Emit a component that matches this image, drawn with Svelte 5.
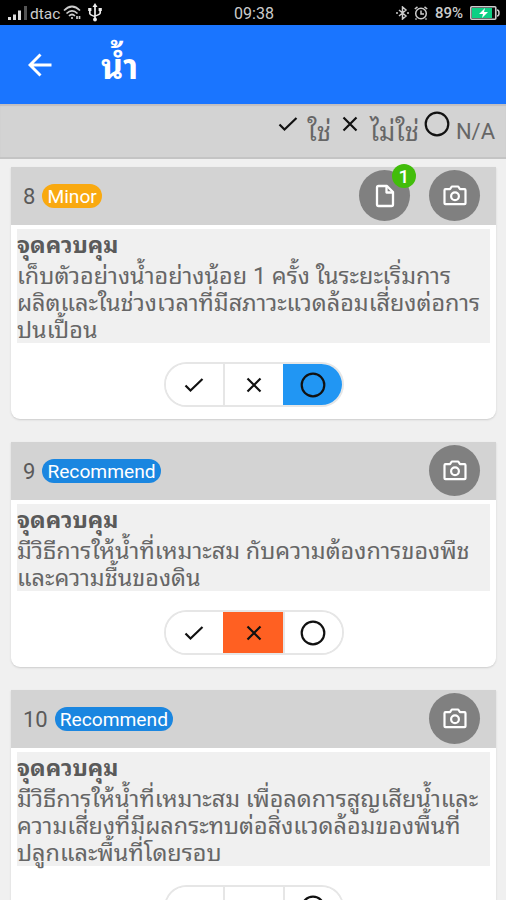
<script>
    let items = $state([
        {
            no: 8,
            level: "Minor",
            notes: 1,
            answer: "na",
            lines: [
                "เก็บตัวอย่างน้ำอย่างน้อย 1 ครั้ง ในระยะเริ่มการ",
                "ผลิตและในช่วงเวลาที่มีสภาวะแวดล้อมเสี่ยงต่อการ",
                "ปนเปื้อน"
            ]
        },
        {
            no: 9,
            level: "Recommend",
            notes: 0,
            answer: "no",
            lines: [
                "มีวิธีการให้น้ำที่เหมาะสม กับความต้องการของพืช",
                "และความชื้นของดิน"
            ]
        },
        {
            no: 10,
            level: "Recommend",
            notes: 0,
            answer: "",
            lines: [
                "มีวิธีการให้น้ำที่เหมาะสม เพื่อลดการสูญเสียน้ำและ",
                "ความเสี่ยงที่มีผลกระทบต่อสิ่งแวดล้อมของพื้นที่",
                "ปลูกและพื้นที่โดยรอบ"
            ]
        }
    ]);

    const choices = ["yes", "no", "na"];
</script>

{#snippet mark(kind)}
    <svg class="mark" width="28" height="28" viewBox="0 0 28 28">
        {#if kind === "yes"}
            <path d="M5.500 14.500l5 5L22.500 8" />
        {:else if kind === "no"}
            <path d="M7.500 7.500l13 13M20.500 7.500l-13 13" />
        {:else}
            <circle cx="14" cy="14" r="11.300" />
        {/if}
    </svg>
{/snippet}

<main>
    <div class="status">
        <div class="side">
            <svg width="20" height="14" viewBox="0 0 20 14">
                <path d="M0 11h3v3H0zM5 8.500h3V14H5zM10 4.500h3V14h-3z" fill="#ddd" />
                <path d="M16 0h3v14h-3z" fill="#555" />
            </svg>
            <span class="carrier">dtac</span>
            <svg width="18" height="15" viewBox="0 0 18 15" fill="none" stroke="#ccc" stroke-width="1.7">
                <path d="M1 5.500Q9-2.500 17 5.500M3.500 8.500Q9 3 14.500 8.500M6 11Q9 8 12 11" />
                <path d="M9 12v2M14 11v3M16.500 11v3" />
            </svg>
            <svg class="usb" width="14" height="19" viewBox="0 0 14 19" fill="none" stroke="#eee" stroke-width="1.700">
                <path d="M7 3v13M1.800 7v3.500Q2 12 7 13.500M12.200 7v3q-.2 1.500-5.200 3" />
                <path d="M4.500 4L7 0l2.500 4zM.2 5h3.200v3H.2zM10.600 5h3.200v3h-3.200z" fill="#eee" stroke="none" />
                <circle cx="7" cy="16.500" r="1.900" fill="#eee" stroke="none" />
            </svg>
        </div>
        <span class="clock">09:38</span>
        <div class="side right">
            <svg width="13" height="14" viewBox="0 0 13 14" fill="none" stroke="#ccc" stroke-width="1.500">
                <path d="M3 4l7 6-3.500 3V1L10 4l-7 6M0 7h2M11 7h2" />
            </svg>
            <svg class="alarm" width="14" height="14" viewBox="0 0 14 14" fill="none" stroke="#ccc" stroke-width="1.500">
                <circle cx="7" cy="7.500" r="5.300" />
                <path d="M7 4.500v3.500h3M.8 3L3.500.8M13.200 3L10.500.8M2.500 12.500l-1 1M11.500 12.500l1 1" />
            </svg>
            <span class="percent">89%</span>
            <svg width="30" height="14" viewBox="0 0 30 14">
                <rect x=".8" y=".8" width="25" height="12.400" rx="1" fill="#111" stroke="#ccc" stroke-width="1.600" />
                <path d="M2 2h20v10H2z" fill="#0bd084" />
                <path d="M27 4q2 0 2 3t-2 3" fill="none" stroke="#ccc" stroke-width="1.500" />
                <path d="M15 2l-6 6h4l-1 4 6-6h-4z" fill="#fff" />
            </svg>
        </div>
    </div>

    <header>
        <svg width="24" height="24" viewBox="0 0 24 24" fill="none" stroke="#fff" stroke-width="2.900">
            <path d="M23.500 12H2.500M12.500 1.500L2 12l10.500 10.500" />
        </svg>
        <h1>น้ำ</h1>
    </header>

    <div class="legend">
        <span class="check">{@render mark("yes")}</span>
        <span class="word thai">ใช่</span>
        <span class="cross">{@render mark("no")}</span>
        <span class="word thai">ไม่ใช่</span>
        <span class="ring">{@render mark("na")}</span>
        <span class="word">N/A</span>
    </div>

    <div class="list">
        {#each items as item}
            <section class="card">
                <div class="top">
                    <span class="number">{item.no}</span>
                    <span class="pill" class:minor={item.level === "Minor"}>{item.level}</span>
                    <div class="actions">
                        {#if item.notes}
                            <button class="round" aria-label="notes">
                                <svg width="20" height="24" viewBox="0 0 20 24" fill="none" stroke="#fff" stroke-width="2.300" stroke-linejoin="round">
                                    <path d="M3.500 2h8.500l6 6v12.500q0 1.500-1.500 1.500h-13Q2 22 2 20.500v-17Q2 2 3.500 2z" />
                                    <path d="M11.500 2v6.500H18" />
                                </svg>
                                <span class="badge">{item.notes}</span>
                            </button>
                        {/if}
                        <button class="round" aria-label="camera">
                            <svg width="24" height="21" viewBox="0 0 24 21" fill="none" stroke="#fff" stroke-width="2.200" stroke-linejoin="round">
                                <path d="M2.500 4.200H7l1.800-2.700h6.400L17 4.200h4.500q1 0 1 1v13q0 1-1 1h-19q-1 0-1-1v-13q0-1 1-1z" />
                                <circle cx="12" cy="11.200" r="3.900" />
                            </svg>
                        </button>
                    </div>
                </div>
                <div class="text">
                    <h2>จุดควบคุม</h2>
                    {#each item.lines as line}
                        <p>{line}</p>
                    {/each}
                </div>
                <div class="answers">
                    {#each choices as choice}
                        <button
                            class="answer {choice}"
                            class:selected={item.answer === choice}
                            aria-label={choice}
                            onclick={() => (item.answer = choice)}
                        >{@render mark(choice)}</button>
                    {/each}
                </div>
            </section>
        {/each}
    </div>
</main>

<style>
    :global(body) {
        margin: 0;
        overflow: hidden;
    }

    main {
        height: 900px;
        overflow: hidden;
        background: #f0f0f0;
        color: #5a5a5a;
        font-family: Roboto, "Noto Sans Thai Looped", Loma, Waree, "Noto Sans", sans-serif;
    }

    svg {
        display: block;
        flex: none;
    }

    button {
        border: 0;
        padding: 0;
        font: inherit;
    }

    .status {
        height: 25px;
        padding: 0 6px 0 8px;
        background: #000;
        color: #ccc;
        font-size: 15px;
        display: flex;
        align-items: center;
    }

    .side {
        flex: 1;
        display: flex;
        align-items: center;
    }

    .right {
        justify-content: flex-end;
    }

    .carrier {
        margin: 3px 2px 0 2px;
        width: 31px;
        font-size: 15.5px;
    }

    .clock {
        padding-top: 2px;
        font-size: 16px;
    }

    .usb {
        margin-left: 7px;
    }

    .alarm {
        margin: 0 7px 0 5px;
    }

    .percent {
        margin: 1px 7px 0 0;
        font-weight: 500;
    }

    header {
        height: 79px;
        background: #1a75ff;
        display: flex;
        align-items: center;
        padding: 1px 28px 0;
        box-sizing: border-box;
        color: #fff;
    }

    h1 {
        margin: 4px 0 0 49px;
        font-size: 34px;
        line-height: 40px;
        font-weight: 700;
    }

    .legend {
        height: 55px;
        box-sizing: border-box;
        background: #d3d3d3;
        border-bottom: 2px solid #c4c4c4;
        box-shadow: inset 0 2px 1px #c2bfc0;
        display: flex;
        justify-content: flex-end;
        align-items: flex-start;
        padding: 6px 11px 0 0;
        font-size: 22px;
        color: #666;
    }

    .word {
        line-height: 30px;
        padding-top: 7px;
        white-space: nowrap;
    }

    .thai {
        font-size: 25.5px;
    }

    .mark {
        fill: none;
        stroke: #111;
        stroke-width: 2.2;
    }

    .check {
        margin-right: 5px;
    }

    .cross {
        margin: 0 6px 0 5px;
    }

    .ring {
        margin: 0 5px 0 4px;
    }

    .list {
        padding: 8px 10px 0 11px;
        display: flex;
        flex-direction: column;
        gap: 23px;
    }

    .card {
        background: #fff;
        border-radius: 0 0 9px 9px;
        padding-bottom: 12px;
        box-shadow: 0 1px 2px #ccc;
    }

    .top {
        height: 58px;
        background: #d3d3d3;
        display: flex;
        align-items: center;
        padding: 0 16px 0 12px;
    }

    .number {
        font-size: 22px;
        margin-right: 7px;
    }

    .pill {
        height: 24px;
        line-height: 25px;
        border-radius: 12px;
        padding: 0 5px;
        font-size: 19.2px;
        background: #1a86e0;
        color: #fff;
    }

    .minor {
        background: #f9a910;
    }

    .actions {
        margin: -1px 0 0 auto;
        display: flex;
        gap: 19px;
    }

    .round {
        position: relative;
        width: 51px;
        height: 51px;
        border-radius: 50%;
        background: #808080;
        display: flex;
        align-items: center;
        justify-content: center;
    }

    .badge {
        position: absolute;
        right: -6px;
        top: -6px;
        width: 24px;
        height: 24px;
        line-height: 25px;
        border-radius: 50%;
        background: #42bd0b;
        color: #fff;
        font-size: 19px;
        font-weight: 500;
    }

    .text {
        margin: 4px 6px 0;
        padding-top: 4px;
        background: #f0f0f0;
    }

    h2 {
        margin: 0;
        height: 29px;
        line-height: 26px;
        font-size: 23px;
    }

    p {
        margin: 0;
        height: 27px;
        line-height: 28px;
        font-size: 23.4px;
        white-space: nowrap;
        color: #666;
    }

    .answers {
        width: 180px;
        height: 45px;
        box-sizing: border-box;
        margin: 19px auto 0;
        border: 2px solid #e6e6e6;
        border-radius: 23px;
        overflow: hidden;
        display: grid;
        grid-template-columns: 57px 60px 59px;
    }

    .answer {
        background: #fff;
        display: flex;
        align-items: center;
        justify-content: center;
    }

    .answer + .answer {
        border-left: 2px solid #e6e6e6;
    }

    .answer.no.selected {
        background: #ff6022;
        border-left-color: #ff6022;
    }

    .answer.na.selected {
        background: #2196f3;
        border-left-color: #2196f3;
    }
</style>
